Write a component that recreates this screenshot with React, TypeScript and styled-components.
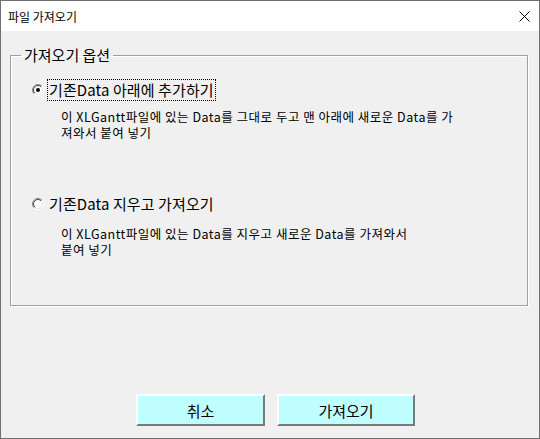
import React from "react";
import styled, { createGlobalStyle } from "styled-components";

const GlobalStyle = createGlobalStyle`
  html, body {
    margin: 0;
    padding: 0;
    background: #f0f0f0;
  }
  body {
    font-family: "Noto Sans CJK KR", "Noto Sans", sans-serif;
    color: #000;
  }
`;

const Window = styled.div`
  width: 540px;
  height: 439px;
  box-sizing: border-box;
  border: 1px solid #6f6f6f;
  display: flex;
  flex-direction: column;
  background: #f0f0f0;
`;

const TitleBar = styled.div`
  height: 30px;
  flex-shrink: 0;
  background: #fff;
  display: flex;
  align-items: center;
  justify-content: space-between;
  padding: 0 9px 0 7px;
  font-size: 12px;
`;

const Body = styled.div`
  flex: 1;
  display: flex;
  flex-direction: column;
  padding: 14px 11px 0 9px;
`;

const GroupBox = styled.fieldset`
  margin: 0;
  padding: 0;
  min-width: 0;
  width: 518px;
  height: 261px;
  box-sizing: border-box;
  border: 1px solid #a0a0a0;
  box-shadow: 1px 1px 0 #fff, inset 1px 1px 0 #fff;
`;

const Legend = styled.legend`
  margin-left: 10px;
  padding: 0 3px;
  height: 20px;
  font-size: 15px;
  line-height: 20px;
`;

const OptionRow = styled.div<{ $top: number }>`
  display: flex;
  align-items: center;
  margin: ${({ $top }) => $top}px 0 0 21px;
`;

const OptionLabel = styled.span<{ $focused?: boolean }>`
  margin-left: 3px;
  padding: 0 1px;
  font-size: 15px;
  line-height: 20px;
  letter-spacing: 0.1px;
  border: 1px dotted ${({ $focused }) => ($focused ? "#000" : "transparent")};
`;

const Description = styled.div<{ $top: number }>`
  margin: ${({ $top }) => $top}px 0 0 50px;
  font-size: 12.5px;
  line-height: 16px;
  letter-spacing: 0.5px;
  white-space: nowrap;
`;

const ButtonRow = styled.div`
  display: flex;
  gap: 12px;
  margin: 88px 0 0 126px;
`;

const Button = styled.button<{ $width: number }>`
  width: ${({ $width }) => $width}px;
  height: 32px;
  padding: 0;
  background: #c0ffff;
  border: 2px solid;
  border-color: #fff #7a7a7a #7a7a7a #fff;
  font-family: inherit;
  font-size: 15px;
  color: #000;
`;

const Radio = ({ checked }: { checked?: boolean }) => (
  <svg width="12" height="12" viewBox="0 0 12 12">
    <defs>
      <linearGradient id="rb" x1="0" y1="0" x2="1" y2="1">
        <stop offset="0.45" stopColor="#808080" />
        <stop offset="0.55" stopColor="#ffffff" />
      </linearGradient>
      <linearGradient id="ri" x1="0" y1="0" x2="1" y2="1">
        <stop offset="0.45" stopColor="#404040" />
        <stop offset="0.55" stopColor="#e0e0e0" />
      </linearGradient>
    </defs>
    <circle cx="6" cy="6" r="5.5" fill="#fff" stroke="url(#rb)" />
    <circle cx="6" cy="6" r="4.5" fill="none" stroke="url(#ri)" />
    {checked && <circle cx="6" cy="6" r="2" fill="#000" />}
  </svg>
);

const CloseIcon = () => (
  <svg width="11" height="11" viewBox="0 0 11 11">
    <path d="M0.5 0.5 L10.5 10.5 M10.5 0.5 L0.5 10.5" stroke="#000" strokeWidth="1" />
  </svg>
);

export default function App() {
  return (
    <>
      <GlobalStyle />
      <Window>
        <TitleBar>
          <span>파일 가져오기</span>
          <CloseIcon />
        </TitleBar>
        <Body>
          <GroupBox>
            <Legend>가져오기 옵션</Legend>
            <OptionRow $top={14}>
              <Radio checked />
              <OptionLabel $focused>기존Data 아래에 추가하기</OptionLabel>
            </OptionRow>
            <Description $top={8}>
              <div>이 XLGantt파일에 있는 Data를 그대로 두고 맨 아래에 새로운 Data를 가</div>
              <div>져와서 붙여 넣기</div>
            </Description>
            <OptionRow $top={52}>
              <Radio />
              <OptionLabel>기존Data 지우고 가져오기</OptionLabel>
            </OptionRow>
            <Description $top={11}>
              <div>이 XLGantt파일에 있는 Data를 지우고 새로운 Data를 가져와서</div>
              <div>붙여 넣기</div>
            </Description>
          </GroupBox>
          <ButtonRow>
            <Button $width={129}>취소</Button>
            <Button $width={138}>가져오기</Button>
          </ButtonRow>
        </Body>
      </Window>
    </>
  );
}
